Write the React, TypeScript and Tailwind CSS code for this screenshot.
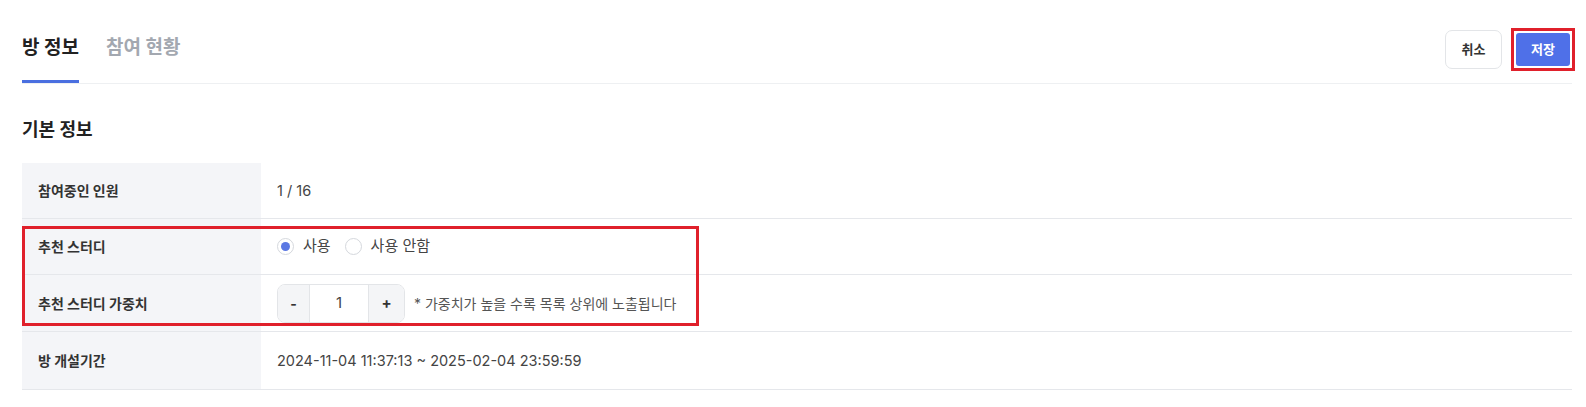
import React from "react";

const rows = [
  { label: "참여중인 인원", value: "count", h: "h-[56px]" },
  { label: "추천 스터디", value: "radio", h: "h-[56px]" },
  { label: "추천 스터디 가중치", value: "weight", h: "h-[57px]" },
  { label: "방 개설기간", value: "period", h: "h-[58px]" },
];

function Radio({ checked, label }: { checked: boolean; label: string }) {
  return (
    <label className="flex items-center gap-[9px] cursor-pointer">
      <span className="w-[17px] h-[17px] rounded-full border border-[#d5d8dd] bg-white flex items-center justify-center">
        {checked && <span className="w-[9px] h-[9px] rounded-full bg-[#5b78e3]" />}
      </span>
      <span className="text-[15px] text-[#444]">{label}</span>
    </label>
  );
}

function Stepper() {
  return (
    <div className="flex items-center gap-[9px]">
      <div className="flex h-[39px] rounded-[8px] border border-[#e3e5e8] overflow-hidden">
        <button className="w-[32px] bg-[#f4f5f7] border-r border-[#e3e5e8] text-[14px] font-bold text-[#333]">
          -
        </button>
        <div className="w-[58px] flex items-center justify-center text-[15px] text-[#444] bg-white">
          1
        </div>
        <button className="w-[36px] bg-[#f4f5f7] border-l border-[#e3e5e8] text-[15px] font-bold text-[#333]">
          +
        </button>
      </div>
      <span className="text-[14px] text-[#555]">* 가중치가 높을 수록 목록 상위에 노출됩니다</span>
    </div>
  );
}

export default function App() {
  return (
    <div
      className="w-[1586px] h-[407px] bg-white pl-[22px] pr-[14px]"
      style={{ fontFamily: 'Inter, "Noto Sans CJK KR", sans-serif' }}
    >
      {/* Header */}
      <div className="h-[84px] flex justify-between items-start border-b border-[#eef0f2]">
        <div className="flex gap-[27px] h-[83px]">
          <div className="h-full pt-[16px] border-b-[3px] border-[#4a6fe0] flex items-center text-[19px] font-bold text-[#222]">
            방 정보
          </div>
          <div className="h-full pt-[16px] border-b-[3px] border-transparent flex items-center text-[19px] font-bold text-[#a3a8b0]">
            참여 현황
          </div>
        </div>

        <div className="flex items-center gap-[9px] pt-[28px] -mr-[3px]">
          <button className="w-[57px] h-[39px] rounded-[7px] border border-[#e3e5e8] bg-white text-[13px] font-bold text-[#333]">
            취소
          </button>
          <div className="border-[3px] border-[#e0202b] p-[2px]">
            <button className="w-[54px] h-[33px] rounded-[3px] bg-[#4f70e8] text-[13px] font-bold text-white">
              저장
            </button>
          </div>
        </div>
      </div>

      {/* Section */}
      <div className="mt-[36px] text-[18px] leading-[20px] font-bold text-[#222]">기본 정보</div>

      <div className="relative mt-[23px]">
        {rows.map((row) => (
          <div key={row.label} className={`flex ${row.h} border-b border-[#e5e7eb]`}>
            <div className="w-[239px] bg-[#f4f5f8] pl-[16px] flex items-center text-[14px] font-bold text-[#333]">
              {row.label}
            </div>
            <div className="flex-1 pl-[16px] flex items-center text-[14.5px] text-[#444]">
              {row.value === "count" && <span>1 / 16</span>}
              {row.value === "radio" && (
                <div className="flex items-center gap-[14px]">
                  <Radio checked label="사용" />
                  <Radio checked={false} label="사용 안함" />
                </div>
              )}
              {row.value === "weight" && <Stepper />}
              {row.value === "period" && <span>2024-11-04 11:37:13 ~ 2025-02-04 23:59:59</span>}
            </div>
          </div>
        ))}

        {/* highlight box */}
        <div className="absolute left-0 top-[63px] w-[677px] h-[100px] border-[3px] border-[#e0202b] pointer-events-none" />
      </div>
    </div>
  );
}
